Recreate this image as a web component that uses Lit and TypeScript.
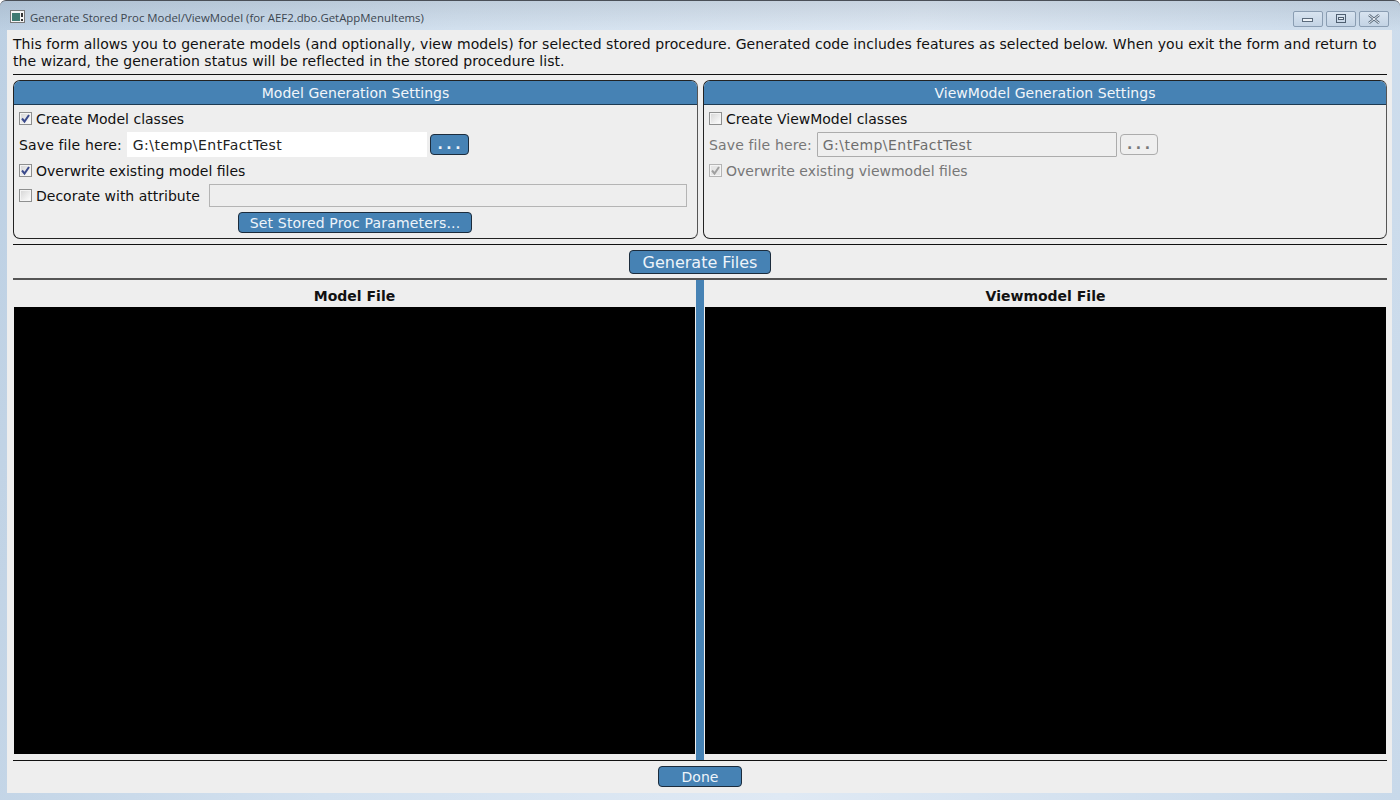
import { LitElement, html, css } from "lit";
import { customElement } from "lit/decorators.js";

const check = html`<svg viewBox="0 0 11 11" width="11" height="11"><path d="M2 5.5 L4.5 8.5 L9 2" fill="none" stroke="currentColor" stroke-width="2"/></svg>`;

@customElement("app-root")
export class AppRoot extends LitElement {
  static styles = css`
    :host { display: block; width: 1400px; height: 800px; overflow: hidden; font-family: "DejaVu Sans", Verdana, sans-serif; font-size: 14px; color: #111; }
    * { box-sizing: border-box; }
    .win { width: 1400px; height: 800px; display: flex; flex-direction: column; border-radius: 6px 6px 0 0; border-top: 1px solid #4a4f57; background: linear-gradient(rgba(120,135,150,0.22), rgba(255,255,255,0) 30px), linear-gradient(100deg, #bdd0e3 0%, #d3e1ef 30%, #dfe9f4 60%, #c8d9ea 100%); padding: 0 8px 7px 7px; }
    .title { height: 29px; flex: none; display: flex; align-items: center; padding-left: 3px; }
    .appicon { width: 15px; height: 13px; flex: none; margin-top: 1px; }
    .tt { margin-left: 5px; font-family: "Open Sans", "Noto Sans", sans-serif; font-size: 11.4px; color: #3c4650; white-space: nowrap; margin-top: 3px; }
    .wb { margin-left: auto; display: flex; gap: 3px; margin-right: 3px; margin-top: 10px; align-self: flex-start; }
    .wb div { width: 30px; height: 16px; border: 1px solid #8a9db2; border-radius: 2px; background: linear-gradient(#d8e4f0, #c3d3e4); display: flex; align-items: center; justify-content: center; }
    .body { flex: 1; background: #eeeeee; padding: 0 5px 0 6px; display: flex; flex-direction: column; min-height: 0; }
    .desc { height: 44px; flex: none; line-height: 17px; padding-top: 6px; letter-spacing: 0.05px; white-space: nowrap; color: #111; }
    hr { margin: 0; border: 0; height: 1px; background: #111; flex: none; }
    hr.g { background: #555; height: 2px; }
    .panels { display: grid; grid-template-columns: 685px 684px; gap: 5px; height: 159px; flex: none; margin: 5px 0; }
    .panel { border: 1px solid #222; border-right-color: #555; border-radius: 7px; display: flex; flex-direction: column; overflow: hidden; }
    .ph { height: 24px; flex: none; background: #4682b4; border-bottom: 1px solid #1d3a52; color: #f2f6fa; text-align: center; line-height: 25px; letter-spacing: 0.05px; }
    .pb { padding: 0 5px; flex: 1; }
    .row { display: flex; align-items: center; white-space: nowrap; }
    .cb { width: 13px; height: 13px; border: 1px solid #8e8f8f; background: linear-gradient(135deg, #d4d4d4, #fff); box-shadow: inset 0 0 0 1px #f4f4f4; color: #3b4a8c; display: flex; align-items: center; justify-content: center; margin-right: 4px; flex: none; }
    .cb.dis { color: #a0a0a0; background: #e6e6e6; border-color: #b4b4b4; }
    .dis-t { color: #777; }
    .r1 { height: 25px; margin-top: 1px; }
    .r2 { height: 26px; margin-top: 1px; letter-spacing: 0.13px; }
    .r3 { height: 25px; }
    .r4 { height: 25px; }
    .tb { height: 25px; background: #fff; padding-left: 6px; line-height: 26px; color: #222; flex: none; margin-top: -2px; }
    .tb.a, .tb.b { letter-spacing: 0.45px; }
    .tb.a { width: 300px; margin-left: 5px; }
    .tb.b { width: 300px; margin-left: 5px; background: #efefef; border: 1px solid #acacac; border-radius: 1px; color: #6d6d6d; padding-left: 5px; line-height: 24px; }
    .tb.c { width: 478px; height: 23px; margin: 0 0 0 9px; background: #eeeeee; border: 1px solid #b4b4b4; }
    .btn { background: #4682b4; color: #eef4fa; border: 1px solid #1c2c3c; border-radius: 4px; text-align: center; padding: 0; font: inherit; display: block; }
    .dots { width: 39px; height: 21px; margin: -2px 0 0 3px; font-weight: bold; letter-spacing: 3.6px; line-height: 17px; padding-left: 3px; }
    .dots.off { background: #efefef; border: 1px solid #acacac; color: #777; width: 38px; }
    .setp { width: 234px; height: 21px; margin: 4px 0 0 219px; line-height: 21px; letter-spacing: 0.17px; }
    .genrow { height: 33px; flex: none; display: flex; align-items: center; justify-content: center; }
    .gen { width: 142px; height: 24px; font-size: 16px; line-height: 24px; margin-top: 1px; }
    .cols { flex: 1; display: grid; grid-template-columns: 681px 10px 681px; min-height: 0; padding-left: 1px; }
    .col { display: flex; flex-direction: column; min-height: 0; }
    .ch { height: 27px; flex: none; text-align: center; font-weight: bold; line-height: 33px; color: #111; font-size: 14px; }
    .code { flex: 1; background: #000; margin-bottom: 6px; }
    .split { background: #4682b4; border-left: 1px solid #eee; border-right: 1px solid #eee; }
    .foot { height: 32px; flex: none; display: flex; justify-content: center; padding-top: 5px; }
    .done { width: 84px; height: 21px; line-height: 20px; }
  `;

  render() {
    return html`<div class="win">
      <div class="title">
        <svg class="appicon" viewBox="0 0 15 13"><rect x=".5" y=".5" width="14" height="12" fill="#f4f4f4" stroke="#777"/><rect x="2" y="3" width="8" height="8" fill="#3f7a72"/><rect x="11" y="3" width="2" height="4" fill="#333"/><rect x="11" y="9" width="2" height="2" fill="#333"/></svg>
        <span class="tt">Generate Stored Proc Model/ViewModel (for AEF2.dbo.GetAppMenuItems)</span>
        <div class="wb">
          <div><svg width="12" height="8" viewBox="0 0 12 8"><rect x=".5" y="3.5" width="10" height="3" fill="#eef3f8" stroke="#5b6b7c"/></svg></div>
          <div><svg width="12" height="10" viewBox="0 0 12 10"><rect x="1.5" y=".5" width="9" height="8" fill="none" stroke="#4f5f70"/><rect x="3.5" y="3.5" width="5" height="2" fill="#eef3f8" stroke="#4f5f70"/></svg></div>
          <div><svg width="14" height="10" viewBox="0 0 14 10"><path d="M2 1 L12 9 M12 1 L2 9" stroke="#5b6b7c" stroke-width="2.6"/><path d="M2 1 L12 9 M12 1 L2 9" stroke="#eef3f8" stroke-width="1"/></svg></div>
        </div>
      </div>
      <div class="body">
        <div class="desc">This form allows you to generate models (and optionally, view models) for selected stored procedure. Generated code includes features as selected below. When you exit the form and return to<br>the wizard, the generation status will be reflected in the stored procedure list.</div>
        <hr />
        <div class="panels">
          <div class="panel">
            <div class="ph">Model Generation Settings</div>
            <div class="pb">
              <div class="row r1"><span class="cb">${check}</span>Create Model classes</div>
              <div class="row r2">Save file here:<span class="tb a">G:\\temp\\EntFactTest</span><button class="btn dots">...</button></div>
              <div class="row r3"><span class="cb">${check}</span>Overwrite existing model files</div>
              <div class="row r4"><span class="cb"></span>Decorate with attribute<span class="tb c"></span></div>
              <button class="btn setp">Set Stored Proc Parameters...</button>
            </div>
          </div>
          <div class="panel">
            <div class="ph">ViewModel Generation Settings</div>
            <div class="pb">
              <div class="row r1"><span class="cb"></span>Create ViewModel classes</div>
              <div class="row r2 dis-t">Save file here:<span class="tb b">G:\\temp\\EntFactTest</span><button class="btn dots off">...</button></div>
              <div class="row r3 dis-t"><span class="cb dis">${check}</span>Overwrite existing viewmodel files</div>
            </div>
          </div>
        </div>
        <hr />
        <div class="genrow"><button class="btn gen">Generate Files</button></div>
        <hr class="g" />
        <div class="cols">
          <div class="col"><div class="ch">Model File</div><div class="code"></div></div>
          <div class="split"></div>
          <div class="col"><div class="ch">Viewmodel File</div><div class="code"></div></div>
        </div>
        <hr />
        <div class="foot"><button class="btn done">Done</button></div>
      </div>
    </div>`;
  }
}
